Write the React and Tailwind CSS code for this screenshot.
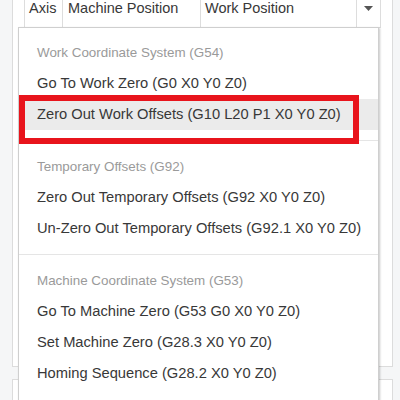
import React from "react";

const sections = [
  {
    title: "Work Coordinate System (G54)",
    items: ["Go To Work Zero (G0 X0 Y0 Z0)", "Zero Out Work Offsets (G10 L20 P1 X0 Y0 Z0)"],
  },
  {
    title: "Temporary Offsets (G92)",
    items: ["Zero Out Temporary Offsets (G92 X0 Y0 Z0)", "Un-Zero Out Temporary Offsets (G92.1 X0 Y0 Z0)"],
  },
  {
    title: "Machine Coordinate System (G53)",
    items: [
      "Go To Machine Zero (G53 G0 X0 Y0 Z0)",
      "Set Machine Zero (G28.3 X0 Y0 Z0)",
      "Homing Sequence (G28.2 X0 Y0 Z0)",
    ],
  },
];

const active = "Zero Out Work Offsets (G10 L20 P1 X0 Y0 Z0)";

function Caret() {
  return (
    <svg width="9" height="5" viewBox="0 0 9 5" className="block">
      <path d="M0 0 H9 L4.5 5 Z" fill="#555" />
    </svg>
  );
}

function Menu() {
  return (
    <div className="absolute left-[5px] top-[27px] w-[361px] h-[400px] bg-white border border-[#cfcfcf] shadow-[1px_1px_2px_rgba(0,0,0,0.22)] pt-[9px]">
      {sections.map((s, i) => (
        <div key={s.title}>
          {i > 0 && <div className="h-px bg-[#e5e5e5] my-[10px]" />}
          <div className="h-[31px] leading-[31px] pl-[18px] text-[13.4px] text-[#9a9a9a]">{s.title}</div>
          {s.items.map((it) => (
            <div
              key={it}
              className={
                "h-[31px] leading-[31px] pl-[18px] text-[14.7px] text-[#383838] whitespace-nowrap " +
                (it === active ? "bg-[#ebebeb]" : "")
              }
            >
              {it}
            </div>
          ))}
        </div>
      ))}
      <div className="absolute left-0 top-[67px] w-[340px] h-[49px] border-[6px] border-[#e8141c]" />
    </div>
  );
}

export default function App() {
  return (
    <div className="h-[400px] overflow-hidden bg-[#f5f6f7] font-['Liberation_Sans',Arial,sans-serif]">
      <div className="relative ml-[12px] w-[381px] h-[367px] bg-white border-x border-b border-[#dcdcdc] px-[11px]">
        <div className="flex border-l border-b border-[#dddddd] text-[14.5px] text-[#383838] leading-[16px]">
          <div className="w-[38px] h-[27px] border-r border-[#dddddd] pl-[4px]">Axis</div>
          <div className="w-[138px] h-[27px] border-r border-[#dddddd] pl-[5px]">Machine Position</div>
          <div className="w-[156px] h-[27px] border-r border-[#dddddd] pl-[4px]">Work Position</div>
          <div className="w-[24px] h-[27px] border-r border-[#dddddd] flex justify-center pt-[6px]">
            <Caret />
          </div>
        </div>
        <Menu />
      </div>
      <div className="ml-[12px] mt-[12px] w-[381px] h-[40px] bg-white border-x border-t border-[#dcdcdc]" />
    </div>
  );
}
